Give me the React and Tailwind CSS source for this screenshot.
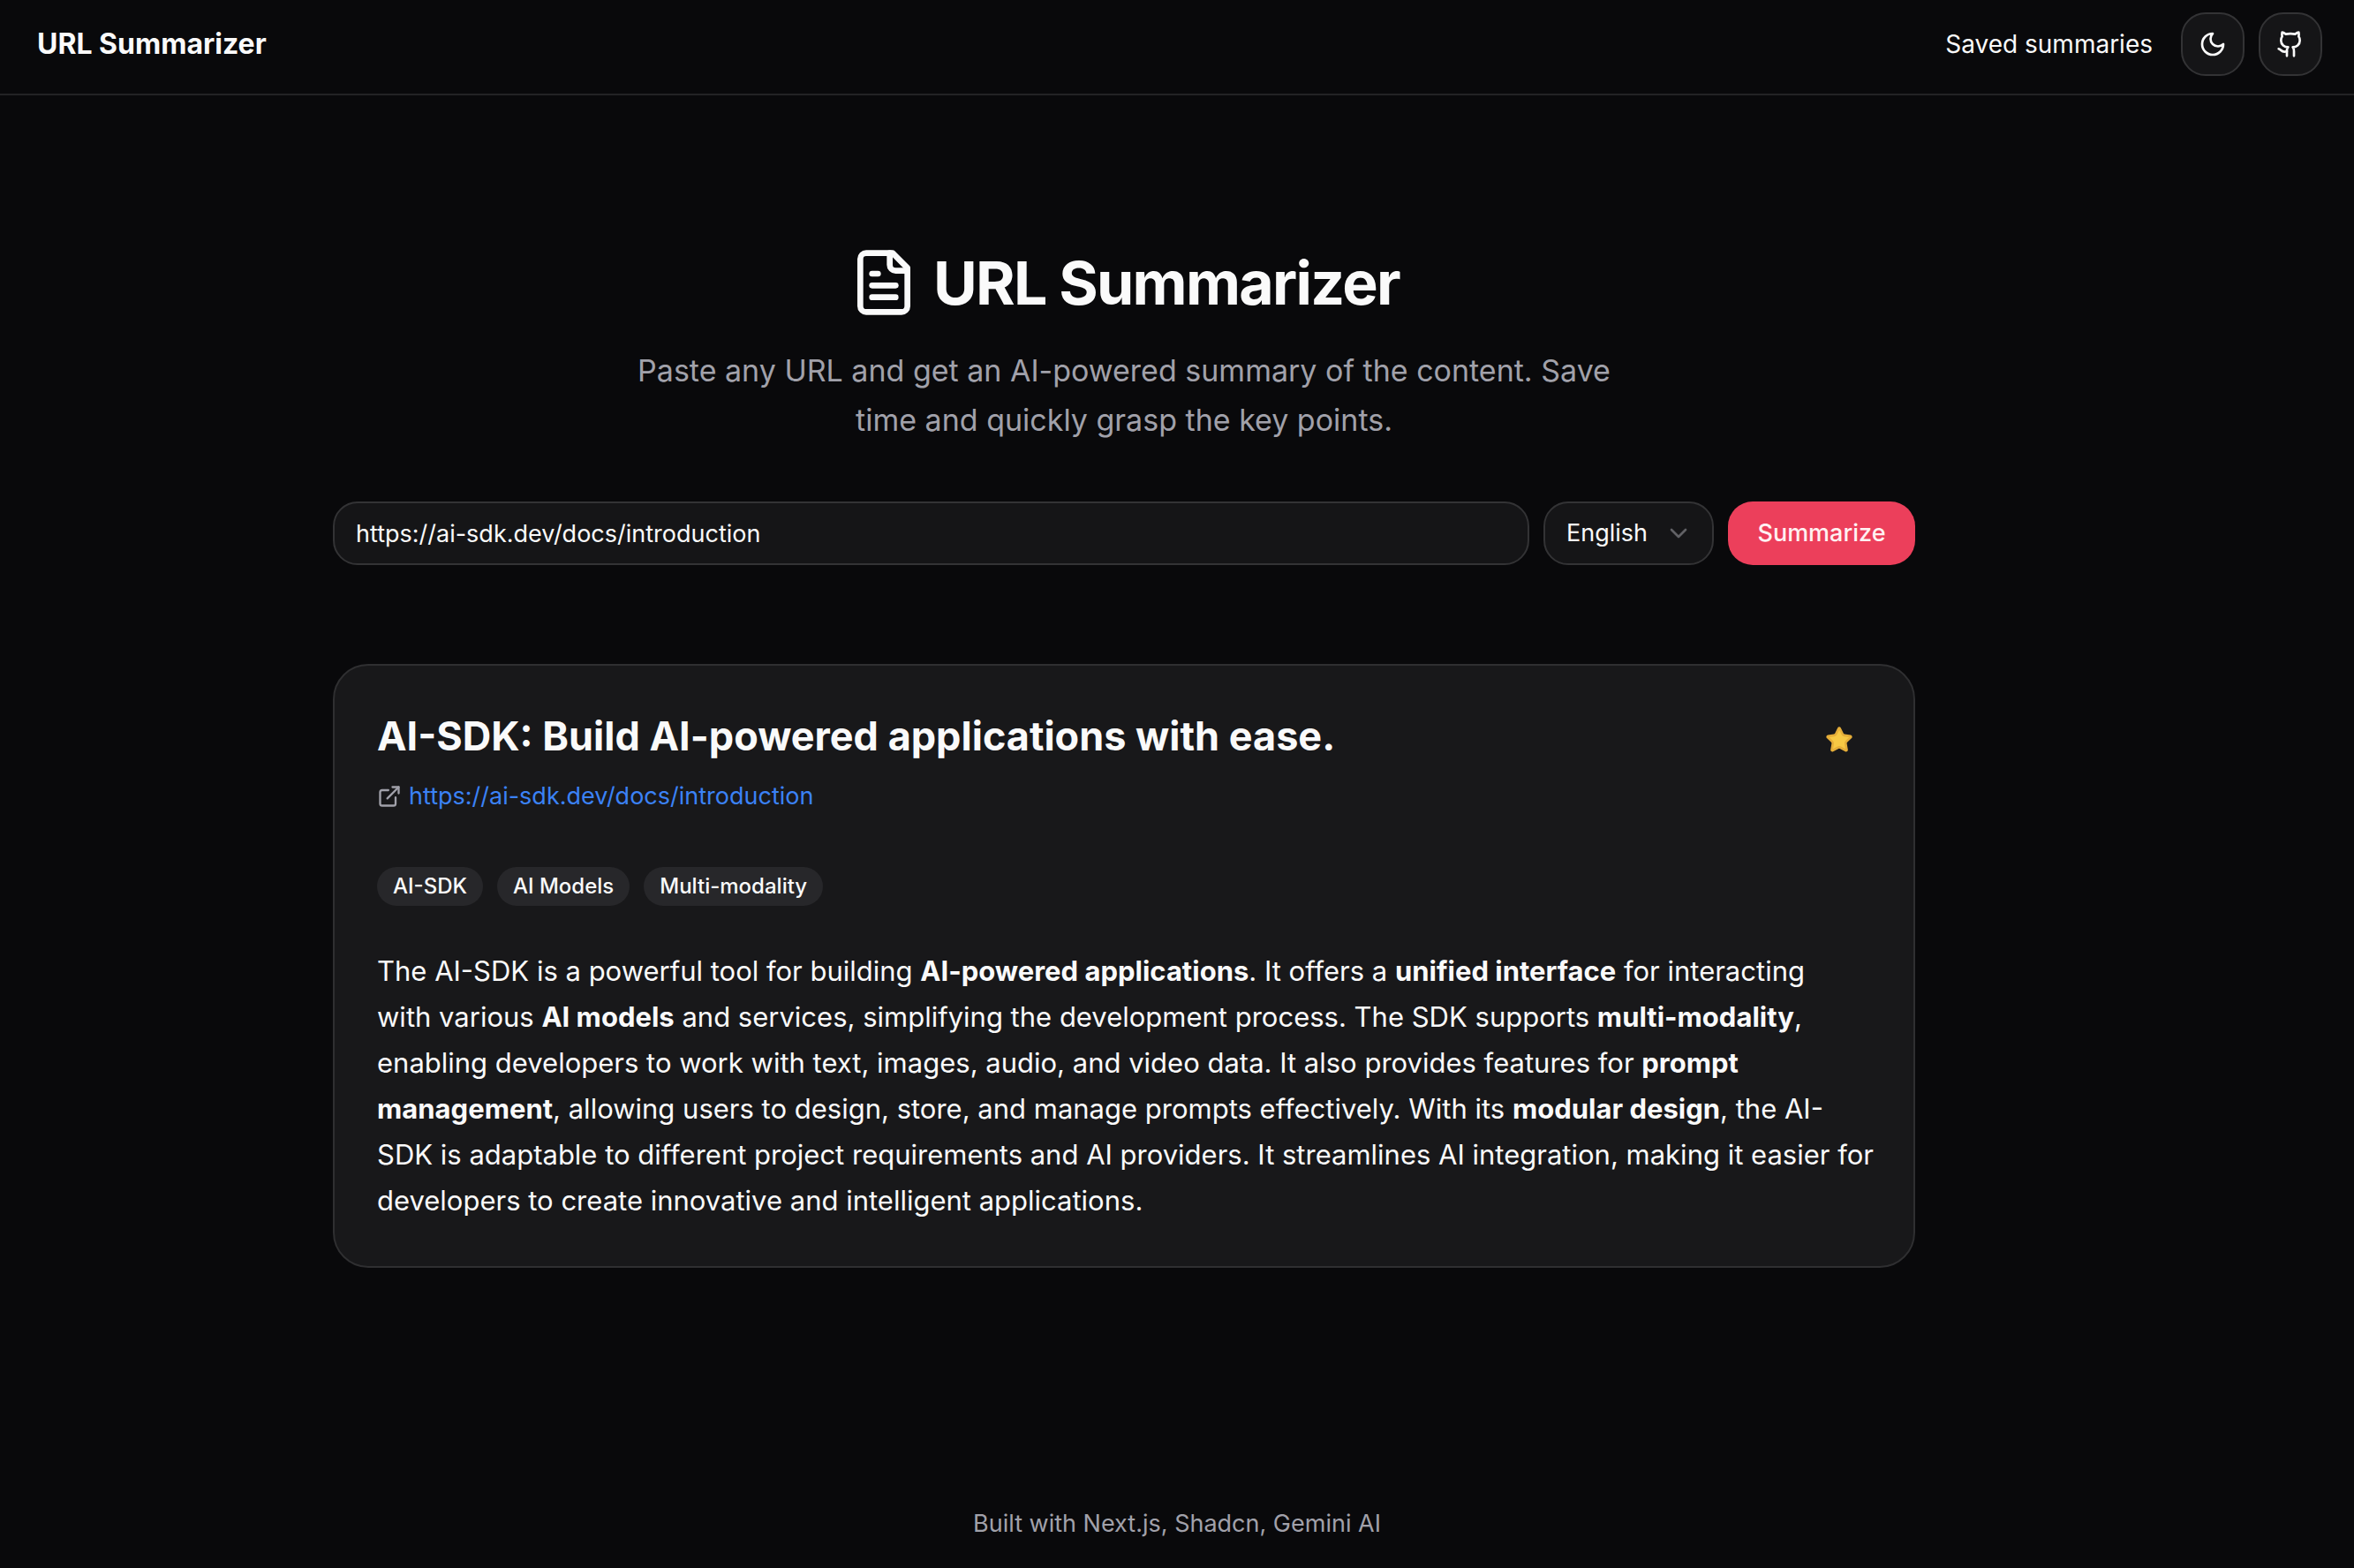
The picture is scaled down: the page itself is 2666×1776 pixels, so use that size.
import React, { useState } from "react";

function Icon({ className, strokeWidth = 2, children }) {
  return (
    <svg
      aria-hidden="true"
      viewBox="0 0 24 24"
      fill="none"
      stroke="currentColor"
      strokeWidth={strokeWidth}
      strokeLinecap="round"
      strokeLinejoin="round"
      className={className}
    >
      {children}
    </svg>
  );
}

function IconButton({ label, children }) {
  return (
    <button
      type="button"
      aria-label={label}
      className="flex size-[72px] items-center justify-center rounded-[28px] border-2 border-[#333335] bg-[#151517]"
    >
      {children}
    </button>
  );
}

function Header() {
  return (
    <header className="flex items-center justify-between border-b-2 border-[#232325] pt-3.5 pr-9 pb-5 pl-[42px]">
      <a href="#" className="text-[32px] leading-10 font-bold">
        URL Summarizer
      </a>
      <nav className="flex items-center gap-4">
        <a href="#saved" className="mr-4 text-[28px] leading-10">
          Saved summaries
        </a>
        <IconButton label="Toggle theme">
          <Icon className="size-8">
            <path d="M12 3a6 6 0 0 0 9 9 9 9 0 1 1-9-9Z" />
          </Icon>
        </IconButton>
        <IconButton label="GitHub">
          <Icon className="size-8">
            <path d="M15 22v-4a4.8 4.8 0 0 0-1-3.5c3 0 6-2 6-5.5.08-1.25-.27-2.48-1-3.5.28-1.15.28-2.35 0-3.5 0 0-1 0-3 1.5-2.64-.5-5.36-.5-8 0C6 2 5 2 5 2c-.3 1.15-.3 2.35 0 3.5A5.403 5.403 0 0 0 4 9c0 3.5 3 5.5 6 5.5-.39.49-.68 1.05-.85 1.65-.17.6-.22 1.23-.15 1.85v4" />
            <path d="M9 18c-4.51 2-5-2-7-2" />
          </Icon>
        </IconButton>
      </nav>
    </header>
  );
}

function Hero() {
  return (
    <section className="flex flex-col items-center gap-8 text-center">
      <div className="flex items-center gap-4">
        <Icon className="size-20">
          <path d="M15 2H6a2 2 0 0 0-2 2v16a2 2 0 0 0 2 2h12a2 2 0 0 0 2-2V7Z" />
          <path d="M14 2v4a2 2 0 0 0 2 2h4" />
          <path d="M10 9H8" />
          <path d="M16 13H8" />
          <path d="M16 17H8" />
        </Icon>
        <h1 className="text-[68px] leading-20 font-bold tracking-tight">URL Summarizer</h1>
      </div>
      <p className="max-w-6xl text-[34px] leading-14 text-[#a1a1aa]">
        Paste any URL and get an AI-powered summary of the content. Save time and quickly grasp the
        key points.
      </p>
    </section>
  );
}

function SummaryForm() {
  const [url, setUrl] = useState("https://ai-sdk.dev/docs/introduction");
  const [language, setLanguage] = useState("English");
  return (
    <form className="mt-16 flex gap-4" onSubmit={(e) => e.preventDefault()}>
      <input
        type="text"
        aria-label="URL"
        value={url}
        onChange={(e) => setUrl(e.target.value)}
        className="h-[72px] min-w-0 flex-1 rounded-[28px] border-2 border-[#333335] bg-[#151517] px-6 text-[27px] leading-10 outline-none"
      />
      <div className="relative">
        <select
          aria-label="Language"
          value={language}
          onChange={(e) => setLanguage(e.target.value)}
          className="h-[72px] w-[193px] appearance-none rounded-[28px] border-2 border-[#333335] bg-[#151517] pl-6 text-[27px] leading-10 outline-none"
        >
          <option>English</option>
          <option>Spanish</option>
        </select>
        <Icon className="pointer-events-none absolute top-5 right-6 size-8 text-[#616165]">
          <path d="m6 9 6 6 6-6" />
        </Icon>
      </div>
      <button
        type="submit"
        className="h-[72px] min-w-[212px] rounded-[28px] bg-[#ec3f5b] px-6 text-[27px] leading-10 font-medium text-[#fff1f2]"
      >
        Summarize
      </button>
    </form>
  );
}

const tags = ["AI-SDK", "AI Models", "Multi-modality"];

function SummaryCard() {
  return (
    <article className="mt-28 rounded-[40px] border-2 border-[#2f2f31] bg-[#18181a] p-12">
      <div className="flex items-start justify-between">
        <div>
          <h2 className="text-[45px] leading-16 font-bold">
            AI-SDK: Build AI-powered applications with ease.
          </h2>
          <p className="mt-4 flex items-center gap-2 text-[27px] leading-10">
            <Icon className="size-7 text-[#a1a1aa]">
              <path d="M15 3h6v6" />
              <path d="M10 14 21 3" />
              <path d="M18 13v6a2 2 0 0 1-2 2H5a2 2 0 0 1-2-2V8a2 2 0 0 1 2-2h6" />
            </Icon>
            <a href="https://ai-sdk.dev/docs/introduction" className="text-[#3b82f6]">
              https://ai-sdk.dev/docs/introduction
            </a>
          </p>
        </div>
        <button
          type="button"
          aria-label="Remove from saved"
          className="flex size-[72px] items-center justify-center"
        >
          <Icon className="size-8 fill-[#f8c944] text-[#e6ae39]">
            <path d="M11.525 2.295a.53.53 0 0 1 .95 0l2.31 4.679a2.123 2.123 0 0 0 1.595 1.16l5.166.756a.53.53 0 0 1 .294.904l-3.736 3.638a2.123 2.123 0 0 0-.611 1.878l.882 5.14a.53.53 0 0 1-.771.56l-4.618-2.428a2.122 2.122 0 0 0-1.973 0L6.396 21.01a.53.53 0 0 1-.77-.56l.881-5.139a2.122 2.122 0 0 0-.611-1.879L2.16 9.795a.53.53 0 0 1 .294-.906l5.165-.755a2.122 2.122 0 0 0 1.597-1.16z" />
          </Icon>
        </button>
      </div>
      <ul className="mt-15 flex gap-4">
        {tags.map((tag) => (
          <li
            key={tag}
            className="rounded-full bg-[#27272a] px-[18px] py-1.5 text-[24px] leading-8 font-medium"
          >
            {tag}
          </li>
        ))}
      </ul>
      <p className="mt-12 -mr-4 text-[31px] leading-13">
        The AI-SDK is a powerful tool for building <strong>AI-powered applications</strong>. It
        offers a <strong>unified interface</strong> for interacting
        <br />
        with various <strong>AI models</strong> and services, simplifying the development process.
        The SDK supports <strong>multi-modality</strong>,
        <br />
        enabling developers to work with text, images, audio, and video data. It also provides
        features for{" "}
        <strong>
          prompt
          <br />
          management
        </strong>
        , allowing users to design, store, and manage prompts effectively. With its{" "}
        <strong>modular design</strong>, the AI-
        <br />
        SDK is adaptable to different project requirements and AI providers. It streamlines AI
        integration, making it easier for
        <br />
        developers to create innovative and intelligent applications.
      </p>
    </article>
  );
}

export default function App() {
  return (
    <div className="flex min-h-screen flex-col bg-[#09090b] font-['Inter',sans-serif] text-[#fafafa]">
      <Header />
      <main className="w-full max-w-[2546px] flex-1 pt-[172px]">
        <div className="mx-auto max-w-[1792px]">
          <Hero />
          <SummaryForm />
          <SummaryCard />
        </div>
      </main>
      <footer className="pt-8 pb-[30px] text-center text-[27px] leading-10 text-[#a1a1aa]">
        Built with Next.js, Shadcn, Gemini AI
      </footer>
    </div>
  );
}
